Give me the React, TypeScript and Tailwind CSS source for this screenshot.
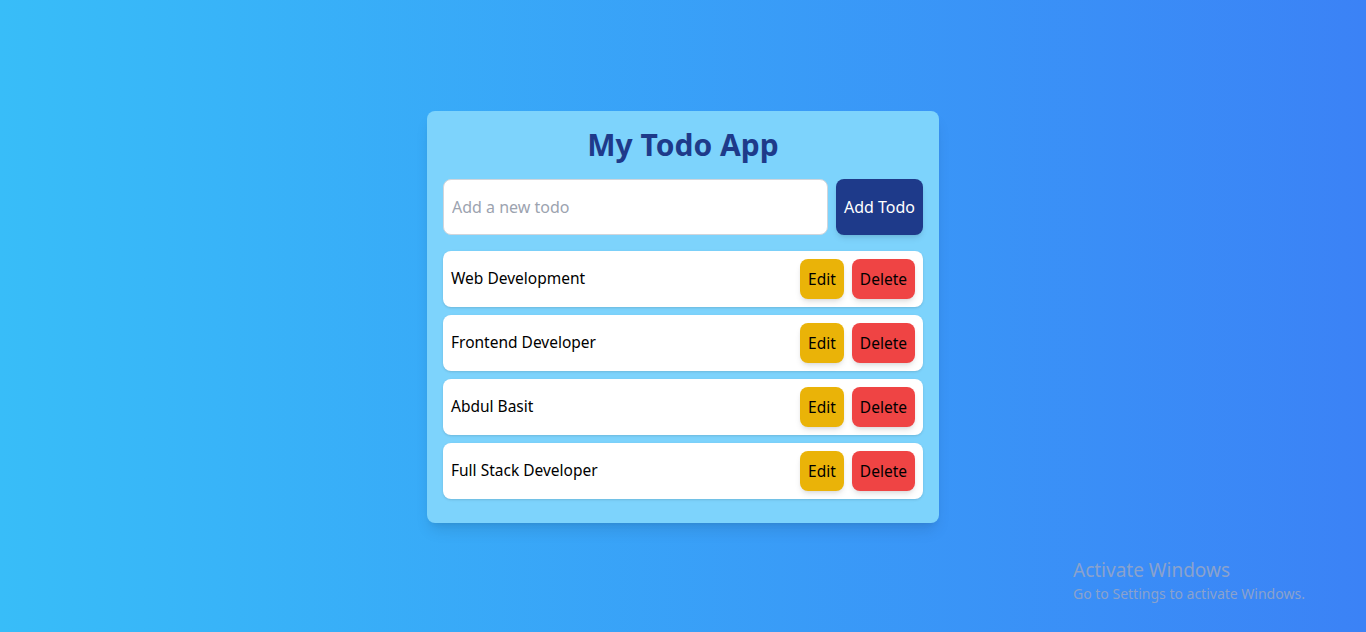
import React from "react";

const todos = ["Web Development", "Frontend Developer", "Abdul Basit", "Full Stack Developer"];

export default function App() {
  return (
    <div
      className="relative min-h-screen flex items-center justify-center bg-gradient-to-r from-[#38bdf8] to-[#3b82f6]"
      style={{ fontFamily: '"Noto Sans", "Open Sans", sans-serif' }}
    >
      <div className="w-[512px] bg-[#7dd3fc] rounded-lg shadow-lg p-4 mt-[2px]">
        <h1 className="text-3xl font-bold text-center text-[#1e3a8a] mb-4 leading-[36px]">My Todo App</h1>
        <div className="flex gap-2 mb-4">
          <input
            className="flex-1 px-2 text-base rounded-lg border border-[#d1d5db] bg-white outline-none placeholder:text-[#9ca3af]"
            placeholder="Add a new todo"
          />
          <button className="px-2 py-4 bg-[#1e3a8a] text-white rounded-lg shadow-md text-base leading-6">Add Todo</button>
        </div>
        <ul>
          {todos.map((t) => (
            <li key={t} className="flex items-center justify-between bg-white rounded-lg shadow p-2 mb-2">
              <span className="text-[15.5px] text-black">{t}</span>
              <div className="flex gap-2">
                <button className="px-2 py-2 bg-[#eab308] rounded-lg shadow-md text-black text-[15.5px] leading-6">Edit</button>
                <button className="px-2 py-2 bg-[#ef4444] rounded-lg shadow-md text-black text-[15.5px] leading-6">Delete</button>
              </div>
            </li>
          ))}
        </ul>
      </div>
      <div className="absolute left-[1073px] top-[559px] text-[#8aa2cc] leading-tight">
        <div className="text-[19px]">Activate Windows</div>
        <div className="text-[14px] mt-[2px]">Go to Settings to activate Windows.</div>
      </div>
    </div>
  );
}
